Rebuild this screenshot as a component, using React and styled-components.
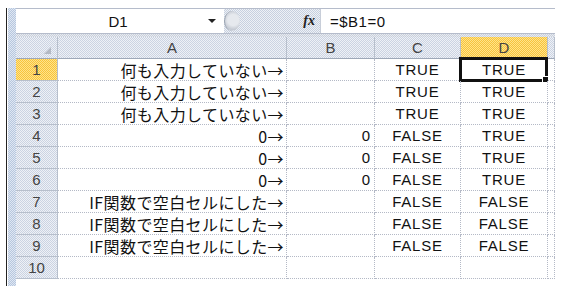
import React from 'react';
import styled, { createGlobalStyle } from 'styled-components';

const GlobalStyle = createGlobalStyle`
  html, body { margin: 0; padding: 0; background: #fff; }
  body { font-family: "Liberation Sans", "Noto Sans CJK JP", sans-serif; }
`;

const dither = (a, b) =>
  `repeating-conic-gradient(${a} 0 25%, ${b} 0 50%) 0 0 / 2px 2px`;

const Page = styled.div`
  width: 567px;
  height: 286px;
  padding-top: 8px;
  padding-left: 6px;
  box-sizing: border-box;
  overflow: hidden;
`;

const Frame = styled.div`
  display: flex;
  height: 100%;
  border-left: 1px solid #222;
`;

const SideStrip = styled.div`
  width: 8px;
  margin-left: 1px;
  background: ${dither('#b7c7df', '#dfe7f2')};
`;

const Sheet = styled.div`
  width: 539px;
  display: flex;
  flex-direction: column;
`;

const FormulaBar = styled.div`
  display: flex;
  height: 24px;
  border-top: 1px solid #b5bccb;
  border-bottom: 1px solid #b5bccb;
`;

const NameBox = styled.div`
  width: 208px;
  display: flex;
  align-items: center;
  background: #fff;
  font-size: 15px;
  color: #111;
`;

const NameText = styled.span`
  flex: 1;
  text-align: center;
  padding-left: 12px;
`;

const DropArrow = styled.span`
  width: 0;
  height: 0;
  margin-right: 8px;
  border-left: 4px solid transparent;
  border-right: 4px solid transparent;
  border-top: 4px solid #222;
`;

const Splitter = styled.div`
  width: 96px;
  display: flex;
  align-items: center;
  background: ${dither('#c7d0df', '#eef1f6')};
`;

const Knob = styled.div`
  width: 15px;
  height: 20px;
  border-radius: 50%;
  background: radial-gradient(circle at 55% 45%, #e6e9ee 0 40%, #c4c9d2 70%, #f4f5f8 100%);
  border-left: 1px solid #9aa3b0;
`;

const FxLabel = styled.span`
  margin-left: auto;
  margin-right: 5px;
  font-family: "Liberation Serif", serif;
  font-style: italic;
  font-weight: bold;
  font-size: 14px;
  color: #222;
`;

const FormulaInput = styled.div`
  flex: 1;
  display: flex;
  align-items: center;
  padding-left: 9px;
  background: #fff;
  font-size: 15px;
  letter-spacing: 0.5px;
  color: #111;
  margin-right: 4px;
  border-left: 1px solid #c8ced9;
`;

const Band = styled.div`
  height: 3px;
  background: ${dither('#c9d0dc', '#e8ebf0')};
`;

const Grid = styled.div`
  display: grid;
  grid-template-columns: 42px 229px 88px 86px 87px 7px;
  grid-auto-rows: 22px;
`;

const HeadCell = styled.div`
  display: flex;
  align-items: center;
  justify-content: center;
  box-sizing: border-box;
  font-size: 15px;
  color: #444;
  background: ${p => (p.$active ? dither('#f7c33d', '#ffe48a') : dither('#cbd3e2', '#eef1f6'))};
  border-right: 1px solid #b7bfcc;
  border-bottom: 1px solid #9ea8b8;
`;

const Corner = styled(HeadCell)`
  justify-content: flex-end;
  align-items: flex-end;
  padding: 0 6px 4px 0;
`;

const CornerMark = styled.span`
  width: 0;
  height: 0;
  border-left: 7px solid transparent;
  border-bottom: 7px solid #b3b9c4;
`;

const RowHead = styled(HeadCell)`
  border-bottom: 1px solid #b7bfcc;
`;

const Cell = styled.div`
  position: relative;
  display: flex;
  align-items: center;
  justify-content: ${p => (p.$align === 'right' ? 'flex-end' : 'center')};
  box-sizing: border-box;
  padding: 0 3px;
  font-size: 15px;
  letter-spacing: 0.8px;
  white-space: nowrap;
  color: #111;
  border-right: 1px dotted #b4b9c6;
  border-bottom: 1px dotted #b4b9c6;
`;

const Label = styled.span`
  font-family: "Noto Sans CJK JP", sans-serif;
  font-size: 16px;
  letter-spacing: 0.4px;
  margin-right: -1px;
`;

const Selection = styled.div`
  position: absolute;
  left: -2px;
  top: -2px;
  right: -1px;
  bottom: -2px;
  border: 3px solid #111;
  pointer-events: none;
`;

const Handle = styled.div`
  position: absolute;
  right: -4px;
  bottom: -4px;
  width: 5px;
  height: 5px;
  background: #111;
  border: 1px solid #fff;
`;

const rows = [
  ['何も入力していない→', '', 'TRUE', 'TRUE'],
  ['何も入力していない→', '', 'TRUE', 'TRUE'],
  ['何も入力していない→', '', 'TRUE', 'TRUE'],
  ['0→', '0', 'FALSE', 'TRUE'],
  ['0→', '0', 'FALSE', 'TRUE'],
  ['0→', '0', 'FALSE', 'TRUE'],
  ['IF関数で空白セルにした→', '', 'FALSE', 'FALSE'],
  ['IF関数で空白セルにした→', '', 'FALSE', 'FALSE'],
  ['IF関数で空白セルにした→', '', 'FALSE', 'FALSE'],
  ['', '', '', ''],
];

const App = () => {
  return (
    <>
      <GlobalStyle />
      <Page>
        <Frame>
          <SideStrip />
          <Sheet>
            <FormulaBar>
              <NameBox>
                <NameText>D1</NameText>
                <DropArrow />
              </NameBox>
              <Splitter>
                <Knob />
                <FxLabel>fx</FxLabel>
              </Splitter>
              <FormulaInput>=$B1=0</FormulaInput>
            </FormulaBar>
            <Band />
            <Grid>
              <Corner><CornerMark /></Corner>
              <HeadCell>A</HeadCell>
              <HeadCell>B</HeadCell>
              <HeadCell>C</HeadCell>
              <HeadCell $active>D</HeadCell>
              <HeadCell />
              {rows.map((r, i) => (
                <React.Fragment key={i}>
                  <RowHead $active={i === 0}>{i + 1}</RowHead>
                  <Cell $align="right"><Label>{r[0]}</Label></Cell>
                  <Cell $align="right">{r[1]}</Cell>
                  <Cell>{r[2]}</Cell>
                  <Cell>
                    {r[3]}
                    {i === 0 && (
                      <Selection>
                        <Handle />
                      </Selection>
                    )}
                  </Cell>
                  <Cell />
                </React.Fragment>
              ))}
            </Grid>
          </Sheet>
        </Frame>
      </Page>
    </>
  );
};

export default App;
